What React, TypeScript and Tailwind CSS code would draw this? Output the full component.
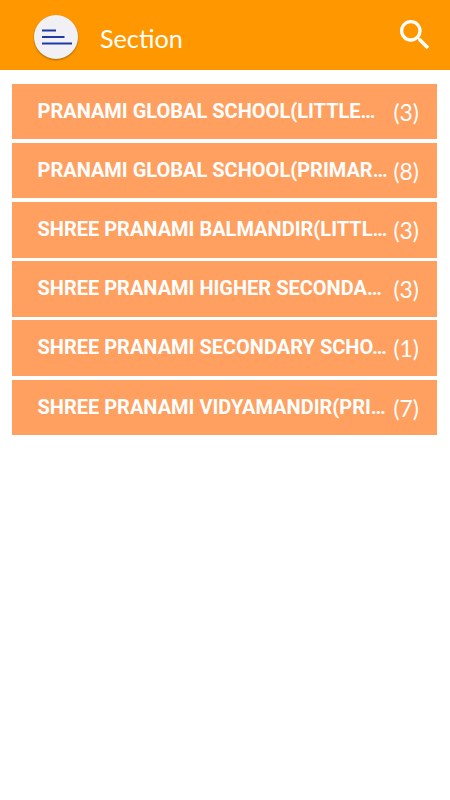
const sections = [
  { title: "PRANAMI GLOBAL SCHOOL(LITTLE…", count: 3 },
  { title: "PRANAMI GLOBAL SCHOOL(PRIMAR…", count: 8 },
  { title: "SHREE PRANAMI BALMANDIR(LITTL…", count: 3 },
  { title: "SHREE PRANAMI HIGHER SECONDA…", count: 3 },
  { title: "SHREE PRANAMI SECONDARY SCHO…", count: 1 },
  { title: "SHREE PRANAMI VIDYAMANDIR(PRI…", count: 7 },
]

function MenuButton() {
  return (
    <button aria-label="Menu" className="flex size-11 items-center justify-center rounded-full bg-[#f1f1f5] shadow-[0_1px_2px_rgba(0,0,0,0.35)]">
      <svg width="30" height="16" viewBox="0 0 30 16" fill="none" stroke="#2139a5" strokeWidth="1.8" className="ml-px">
        <path d="M0 1.5h14M0 8h22.5M0 14.5h30" />
      </svg>
    </button>
  )
}

function SearchButton() {
  return (
    <button aria-label="Search">
      <svg width="40" height="40" viewBox="0 0 24 24" fill="white">
        <path d="M15.5 14h-.79l-.28-.27A6.471 6.471 0 0 0 16 9.5 6.5 6.5 0 1 0 9.5 16c1.61 0 3.09-.59 4.23-1.57l.27.28v.79l5 4.99L20.49 19l-4.99-5zm-6 0C7.01 14 5 11.99 5 9.5S7.01 5 9.5 5 14 7.01 14 9.5 11.99 14 9.5 14z" />
      </svg>
    </button>
  )
}

export default function App() {
  return (
    <div className="min-h-screen bg-white font-['Lato',sans-serif] text-white">
      <header className="flex h-[70px] items-start bg-[#ff9800] pl-[34.4px] pr-[15px] pt-[15px]">
        <MenuButton />
        <h1 className="ml-[21.6px] mt-[3px] grow text-[25.2px] leading-10">Section</h1>
        <SearchButton />
      </header>
      <ul className="flex flex-col gap-[3.5px] pl-[12.4px] pr-[12.6px] pt-[13.6px]">
        {sections.map((section) => (
          <li key={section.title} className="flex h-[55.7px] items-start bg-[#ffa060] pl-[25.1px]">
            <span className="w-[356px] shrink-0 whitespace-nowrap pt-[13px] font-['Roboto',sans-serif] text-[20px] font-bold leading-7">
              {section.title}
            </span>
            <span className="pt-[13px] text-[22.8px] leading-[30px]">({section.count})</span>
          </li>
        ))}
      </ul>
    </div>
  )
}
